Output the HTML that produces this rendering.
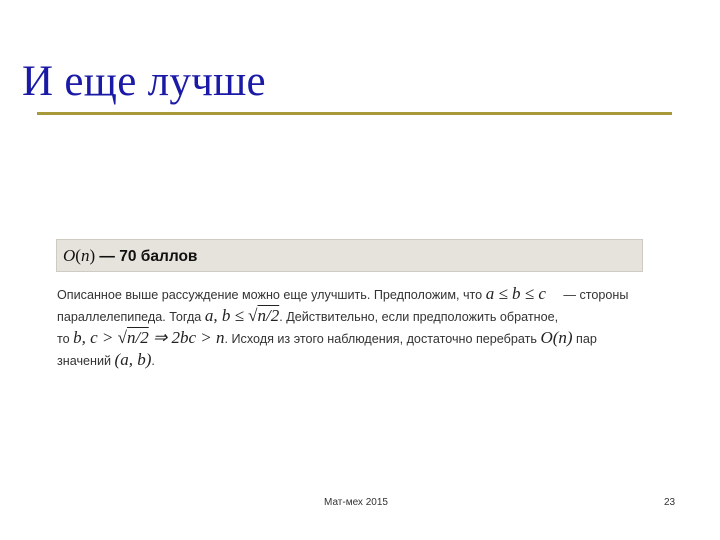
<!DOCTYPE html>
<html><head><meta charset="utf-8"><style>
body{margin:0;width:720px;height:540px;background:#fff;position:relative;overflow:hidden;font-family:"Liberation Sans",sans-serif}
.t{position:absolute;left:22px;top:57px;font:43px "Liberation Serif",serif;color:#1a1aa6;white-space:nowrap;letter-spacing:0.3px}
.ln{position:absolute;left:37px;top:112px;width:635px;height:3px;background:#a89a3a}
.box{position:absolute;left:56px;top:239px;width:587px;height:33px;background:#e6e3dc;border:1px solid #cfcbc2;box-sizing:border-box;font-size:15.5px;font-weight:bold;line-height:31px;padding-left:6px;color:#111}
.m{font:italic 17px "Liberation Serif",serif;font-weight:normal}
.p{position:absolute;left:57px;top:284px;width:600px;font-size:12.6px;line-height:21px;color:#333;white-space:nowrap}
.p .m{font-size:17px;color:#222}
.f{position:absolute;top:497px;font-size:10px;color:#333}
</style></head><body>
<div class="t">И еще лучше</div>
<div class="ln"></div>
<div class="box"><span class="m">O</span><span style="font-weight:normal;font-family:'Liberation Serif';font-size:17px">(</span><span class="m">n</span><span style="font-weight:normal;font-family:'Liberation Serif';font-size:17px">)</span> — 70 баллов</div>
<div class="p">Описанное выше рассуждение можно еще улучшить. Предположим, что <span class="m">a ≤ b ≤ c</span> &nbsp;&nbsp;&nbsp;&nbsp;— стороны<br>параллелепипеда. Тогда <span class="m">a, b ≤ √<span style="text-decoration:overline">n/2</span></span>. Действительно, если предположить обратное,<br>то <span class="m">b, c &gt; √<span style="text-decoration:overline">n/2</span> ⇒ 2bc &gt; n</span>. Исходя из этого наблюдения, достаточно перебрать <span class="m">O(n)</span> пар<br>значений <span class="m">(a, b)</span>.</div>
<div class="f" style="left:324px">Мат-мех 2015</div>
<div class="f" style="left:664px">23</div>
</body></html>
